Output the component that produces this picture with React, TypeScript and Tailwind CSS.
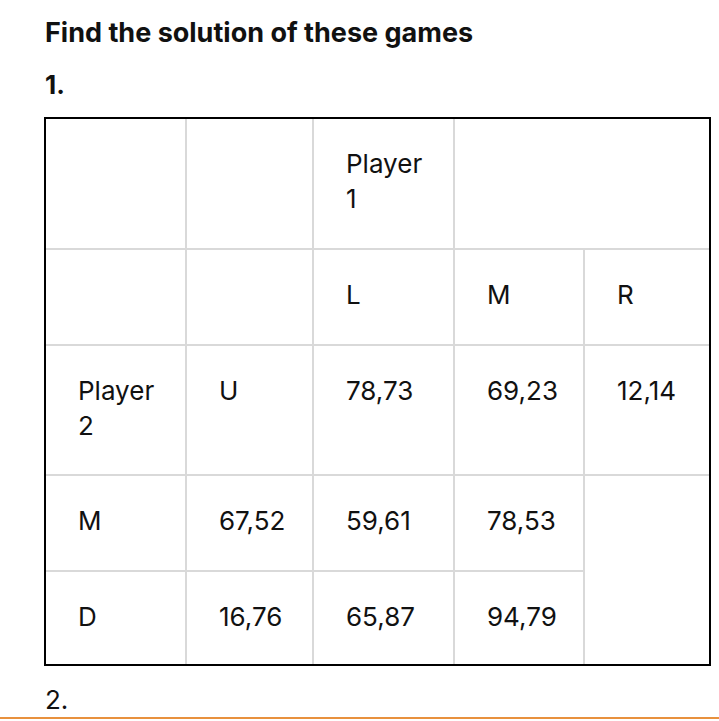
import React from 'react';

type Cell = { text?: string[]; colSpan?: number; rowSpan?: number };

const rows: Cell[][] = [
  [{}, {}, { text: ['Player', '1'] }, { colSpan: 2 }],
  [{}, {}, { text: ['L'] }, { text: ['M'] }, { text: ['R'] }],
  [{ text: ['Player', '2'] }, { text: ['U'] }, { text: ['78,73'] }, { text: ['69,23'] }, { text: ['12,14'] }],
  [{ text: ['M'] }, { text: ['67,52'] }, { text: ['59,61'] }, { text: ['78,53'] }, { rowSpan: 2 }],
  [{ text: ['D'] }, { text: ['16,76'] }, { text: ['65,87'] }, { text: ['94,79'] }],
];

export default function App() {
  return (
    <div className="w-[719px] h-[721px] overflow-hidden bg-white text-[#111] font-['Inter',sans-serif]">
      <div className="px-[45px] pt-[16px]">
        <h1 className="text-[27px] leading-[34px] font-bold">Find the solution of these games</h1>
        <p className="mt-[18px] text-[26px] leading-[34px] font-bold">1.</p>

        <div className="mt-[15px] -ml-px w-[667px] border-2 border-black">
          <div className="grid grid-cols-[139px_125px_139px_128px_124px] grid-rows-[129px_94px_128px_94px_92px] gap-[2px] bg-[#d9d9d9]">
            {rows.flatMap((row, r) =>
              row.map((cell, c) => (
                <div
                  key={`${r}-${c}`}
                  className={`bg-white pl-[32px] pr-[20px] pt-[27px] text-[26px] leading-[35px] font-normal ${
                    cell.colSpan === 2 ? 'col-span-2' : ''
                  } ${cell.rowSpan === 2 ? 'row-span-2' : ''}`}
                >
                  {cell.text?.map((line, i) => (
                    <div key={i}>{line}</div>
                  ))}
                </div>
              ))
            )}
          </div>
        </div>

        <p className="mt-[17px] text-[26px] leading-[34px]">2.</p>
      </div>
      <div className="h-[2px] bg-[#e8913d]" />
    </div>
  );
}
